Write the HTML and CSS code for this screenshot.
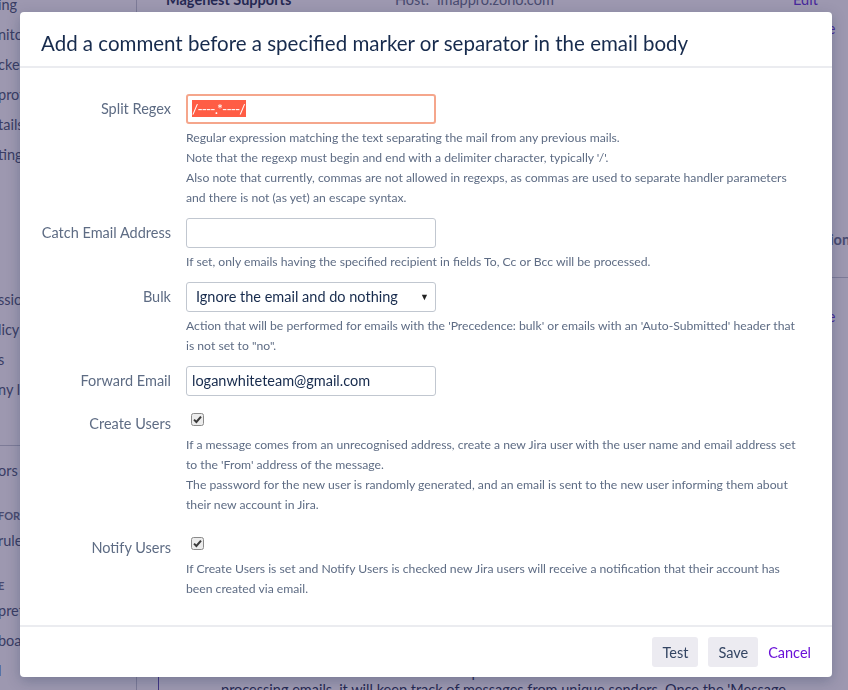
FILE: index.html
```html
<!DOCTYPE html>
<html lang="en">
<head>
  <meta charset="UTF-8">
  <meta name="viewport" content="width=device-width, initial-scale=1.0">
  <title>Mail handler</title>
  <link rel="stylesheet" href="styles.css">
</head>
<body>
  <div class="page">
    <aside class="sidebar">
      <ul class="nav-group first">
        <li>ing</li>
        <li>nitoring</li>
        <li>ckers</li>
        <li>profiling</li>
        <li>tails</li>
        <li>ting</li>
      </ul>
      <ul class="nav-group second">
        <li>ssions</li>
        <li>licy</li>
        <li>s</li>
        <li>ny login</li>
      </ul>
      <ul class="nav-group third">
        <li>ors</li>
        <li class="nav-heading">FOR</li>
        <li>rules</li>
        <li class="nav-heading">E</li>
        <li>preferences</li>
        <li>boards</li>
        <li>l</li>
      </ul>
    </aside>

    <main class="content">
      <div class="server-row">
        <span class="server-name">Magenest Supports</span>
        <span class="server-host"><span class="host-label">Host:</span>imappro.zoho.com</span>
        <a class="link">Edit</a>
      </div>
      <div class="ops-row"><a class="link">Delete</a></div>
      <div class="table-head"><span>Description</span></div>
      <div class="ops-row lower"><a class="link">Delete</a></div>
      <div class="note-box">
        Jira will create a new issue for each unique sender that it finds when<br>
        processing emails, it will keep track of messages from unique senders. Once the 'Message
      </div>
    </main>
  </div>

  <div class="blanket"></div>

  <section class="dialog">
    <header class="dialog-header">
      <h2>Add a comment before a specified marker or separator in the email body</h2>
    </header>

    <div class="dialog-body">
      <div class="field">
        <label>Split Regex</label>
        <div class="control">
          <div class="input focused"><span class="selected">/----.*----/</span></div>
          <div class="help">
            Regular expression matching the text separating the mail from any previous mails.<br>
            Note that the regexp must begin and end with a delimiter character, typically '/'.<br>
            Also note that currently, commas are not allowed in regexps, as commas are used to separate handler parameters<br>
            and there is not (as yet) an escape syntax.
          </div>
        </div>
      </div>

      <div class="field">
        <label>Catch Email Address</label>
        <div class="control">
          <div class="input"></div>
          <div class="help">If set, only emails having the specified recipient in fields To, Cc or Bcc will be processed.</div>
        </div>
      </div>

      <div class="field">
        <label>Bulk</label>
        <div class="control">
          <div class="input select"><span>Ignore the email and do nothing</span><span class="arrow">▼</span></div>
          <div class="help">
            Action that will be performed for emails with the 'Precedence: bulk' or emails with an 'Auto-Submitted' header that<br>
            is not set to "no".
          </div>
        </div>
      </div>

      <div class="field">
        <label>Forward Email</label>
        <div class="control">
          <div class="input">loganwhiteteam@gmail.com</div>
        </div>
      </div>

      <div class="field check">
        <label>Create Users</label>
        <div class="control">
          <div class="checkbox-wrap">
            <svg class="checkbox" width="13" height="13" viewBox="0 0 13 13">
              <rect x="0.5" y="0.5" width="12" height="12" rx="2" fill="#ececec" stroke="#8a8a8a"/>
              <path d="M3 6.6 L5.4 9 L10 3.6" fill="none" stroke="#3a3a3a" stroke-width="2"/>
            </svg>
          </div>
          <div class="help">
            If a message comes from an unrecognised address, create a new Jira user with the user name and email address set<br>
            to the 'From' address of the message.<br>
            The password for the new user is randomly generated, and an email is sent to the new user informing them about<br>
            their new account in Jira.
          </div>
        </div>
      </div>

      <div class="field check spaced">
        <label>Notify Users</label>
        <div class="control">
          <div class="checkbox-wrap">
            <svg class="checkbox" width="13" height="13" viewBox="0 0 13 13">
              <rect x="0.5" y="0.5" width="12" height="12" rx="2" fill="#ececec" stroke="#8a8a8a"/>
              <path d="M3 6.6 L5.4 9 L10 3.6" fill="none" stroke="#3a3a3a" stroke-width="2"/>
            </svg>
          </div>
          <div class="help">
            If Create Users is set and Notify Users is checked new Jira users will receive a notification that their account has<br>
            been created via email.
          </div>
        </div>
      </div>
    </div>

    <footer class="dialog-footer">
      <button class="button">Test</button>
      <button class="button">Save</button>
      <a class="cancel">Cancel</a>
    </footer>
  </section>
</body>
</html>
```

FILE: styles.css
```css
body {
  margin: 0;
  width: 848px;
  height: 690px;
  overflow: hidden;
  font-family: Lato, "Open Sans", sans-serif;
  font-size: 14.5px;
  color: #172b4d;
}

/* page behind the dialog */
.page {
  display: flex;
  height: 690px;
  background: #fff;
  overflow: hidden;
}
.sidebar {
  width: 136px;
  flex: none;
  border-right: 1px solid #c1c7d0;
  color: #42526e;
  white-space: nowrap;
  overflow: hidden;
}
.nav-group {
  list-style: none;
  margin: 0;
  padding: 0;
}
.nav-group li {
  height: 30px;
  line-height: 30px;
  text-indent: -2px;
}
.nav-group.first {
  margin-top: -10px;
}
.nav-group.second {
  margin-top: 115px;
}
.nav-group.third {
  margin-top: 40px;
  border-top: 1px solid #c1c7d0;
  padding-top: 10px;
}
.nav-group li.nav-heading {
  height: 20px;
  line-height: 20px;
  margin-top: 20px;
  font-size: 11px;
  font-weight: 700;
  color: #5e6c84;
}
.content {
  flex: 1;
  padding-left: 29px;
  white-space: nowrap;
}
.server-row {
  display: flex;
  margin-top: -10px;
  height: 20px;
  line-height: 20px;
}
.server-name {
  width: 229px;
  font-weight: 700;
}
.server-host {
  width: 398px;
  color: #5e6c84;
}
.host-label {
  display: inline-block;
  width: 42px;
}
.link {
  color: #5b2bd6;
}
.ops-row {
  margin-top: 9px;
  height: 20px;
  line-height: 20px;
  padding-left: 627px;
}
.ops-row.lower {
  margin-top: 29px;
}
.table-head {
  margin-top: 191px;
  padding: 0 0 27px 609px;
  line-height: 20px;
  font-weight: 700;
  color: #5e6c84;
  border-bottom: 1px solid #c1c7d0;
}
.note-box {
  margin: 313px 0 0 -8px;
  padding: 23px 0 0 62px;
  height: 60px;
  line-height: 18px;
  border-left: 1px solid #5243aa;
}

.blanket {
  position: fixed;
  inset: 0;
  background: rgba(50, 40, 90, 0.48);
}

/* dialog */
.dialog {
  position: fixed;
  left: 20px;
  top: 12px;
  width: 812px;
  height: 665px;
  background: #fff;
  border-radius: 4px;
  box-shadow: 0 4px 14px rgba(9, 30, 66, 0.25);
  display: flex;
  flex-direction: column;
}
.dialog-header {
  padding: 19px 21px 11px;
  border-bottom: 2px solid #ebecf0;
}
.dialog-header h2 {
  margin: 0;
  font-size: 20.5px;
  font-weight: 400;
  line-height: 24px;
  color: #172b4d;
}
.dialog-body {
  flex: 1;
  padding: 26px 10px 0 0;
}
.field {
  display: grid;
  grid-template-columns: 151px 1fr;
  column-gap: 15px;
  margin-bottom: 10px;
}
.field label {
  text-align: right;
  line-height: 30px;
  color: #5e6c84;
}
.field.check label {
  padding-top: 3px;
}
.field.spaced {
  margin-top: 15px;
}
.input {
  box-sizing: border-box;
  width: 250px;
  height: 30px;
  border: 1px solid #c1c7d0;
  border-radius: 3px;
  padding: 0 5px;
  line-height: 28px;
  color: #172b4d;
}
.input.focused {
  border: 2px solid #f5a68c;
  padding: 0 4px;
  line-height: 26px;
}
.selected {
  background: #ff5d45;
  color: #fff;
  font-size: 14px;
  letter-spacing: -0.9px;
  padding-right: 1px;
}
.select {
  display: flex;
  justify-content: space-between;
  padding: 0 6px 0 9px;
}
.arrow {
  font-size: 9px;
  color: #222;
}
.checkbox-wrap {
  height: 18px;
  padding-top: 7px;
}
.checkbox {
  display: block;
  margin-left: 5px;
}
.help {
  margin-top: 4px;
  font-size: 12.2px;
  line-height: 20px;
  color: #5e6c84;
  white-space: nowrap;
}

.dialog-footer {
  display: flex;
  justify-content: flex-end;
  align-items: center;
  gap: 10px;
  padding: 10px 21px;
  border-top: 2px solid #ebecf0;
}
.button {
  height: 30px;
  padding: 0 10px;
  border: none;
  border-radius: 3px;
  background: #ecebf1;
  color: #344563;
  font-family: Lato, "Open Sans", sans-serif;
  font-size: 14.5px;
}
.cancel {
  color: #6a12d8;
}
```
